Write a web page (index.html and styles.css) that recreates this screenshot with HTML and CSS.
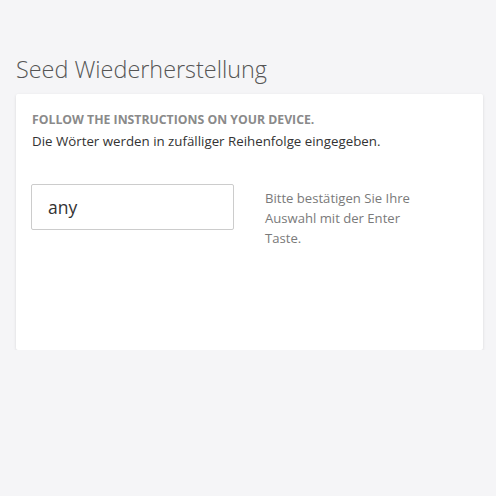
FILE: index.html
```html
<!DOCTYPE html>
<html lang="de">
<head>
    <meta charset="UTF-8">
    <title>Seed Wiederherstellung</title>
    <link rel="stylesheet" href="styles.css">
</head>
<body>
    <div class="page">
        <h1 class="title">Seed Wiederherstellung</h1>

        <div class="card">
            <p class="hint-title">Follow the instructions on your device.</p>
            <p class="hint-text">Die Wörter werden in zufälliger Reihenfolge eingegeben.</p>

            <div class="entry-row">
                <input type="text" class="word-input" value="any">
                <p class="entry-help">Bitte bestätigen Sie Ihre Auswahl mit der Enter Taste.</p>
            </div>
        </div>
    </div>
</body>
</html>
```

FILE: styles.css
```css
/* Basic styling */
html, body { margin: 0; padding: 0; }
body { background: #f5f5f7; font-family: "Open Sans", "Noto Sans", sans-serif; color: #333; }
.page { padding: 54px 13px 0 16px; }
.title { margin: 0 0 10px 0; font-size: 23.4px; font-weight: 300; color: #555; line-height: 30px; }
.card { background: #fff; border-radius: 2px; box-shadow: 0 1px 3px rgba(0, 0, 0, 0.12); height: 256px; padding: 16px 16px 0 16px; box-sizing: border-box; }
.hint-title { margin: 0; font-size: 12.25px; font-weight: 700; text-transform: uppercase; color: #8a8a8a; line-height: 20px; }
.hint-text { margin: 0; font-size: 13.3px; color: #333; line-height: 22px; }
.entry-row { display: flex; align-items: flex-start; margin-top: 32px; gap: 31px; }
.word-input { width: 203px; height: 46px; box-sizing: border-box; border: 1px solid #ccc; border-radius: 2px; padding: 0 16px; margin-left: -1px; font-family: inherit; font-size: 17.5px; color: #333; outline: none; }
.entry-help { margin: 4px 0 0 0; width: 165px; font-size: 13.1px; line-height: 20px; color: #7a7a7a; }
```
